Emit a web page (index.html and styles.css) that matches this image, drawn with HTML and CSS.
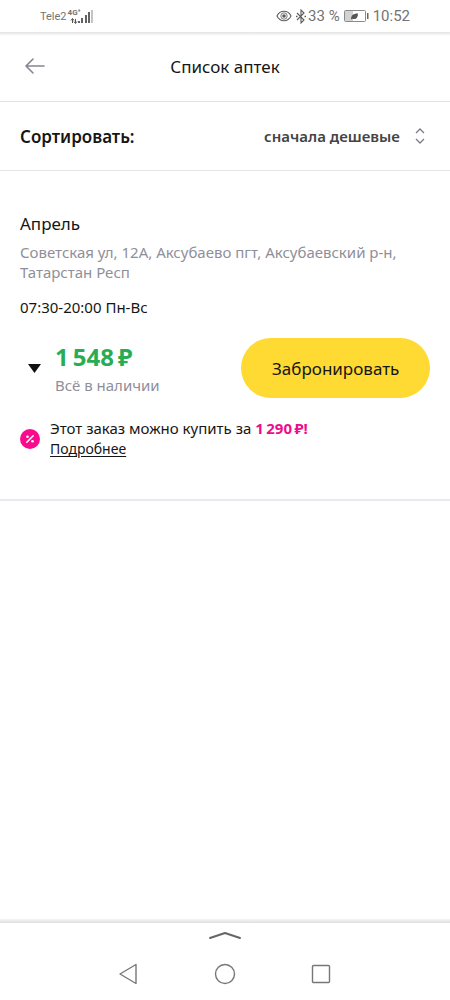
FILE: index.html
```html
<!DOCTYPE html>
<html lang="ru">
<head>
<meta charset="utf-8">
<meta name="viewport" content="width=device-width, initial-scale=1">
<title>Список аптек</title>
<link rel="stylesheet" href="styles.css">
</head>
<body>
<div class="status">
  <div class="carrier">
    <span>Tele2</span>
    <span class="network">
      <span class="network-type">4G⁺</span>
      <svg class="signal" width="26" height="15" viewBox="0 0 26 15" aria-hidden="true">
        <path d="M4.500 14v-4M3 11.500l1.500-2 1.500 2M7.500 10v4M6 12.500l1.500 2 1.500-2" fill="none" stroke="#555"/>
        <path d="M10 12h2v2h-2zM13 9h2v5h-2zM17 6h2v8h-2zM20 3h2v11h-2z" fill="#626262"/>
        <path d="M23 1h2v13h-2z" fill="#c4c4c4"/>
      </svg>
    </span>
  </div>
  <div class="indicators">
    <svg width="16" height="12" viewBox="0 0 16 12" fill="none" stroke="#5c5c5c" stroke-width="1.100" aria-hidden="true">
      <path d="M1 6C4-.3 12-.3 15 6 12 12.300 4 12.300 1 6z"/><circle cx="8" cy="6" r="3.200" stroke-width=".8"/><circle cx="8" cy="6" r="1.800" fill="#5c5c5c" stroke="none"/>
    </svg>
    <svg class="bluetooth" width="10" height="15" viewBox="0 0 10 15" fill="none" stroke="#5c5c5c" stroke-width="1.100" aria-hidden="true">
      <path d="M1 4l7 7-3 3V1l3 3-7 7"/><path d="M0 7.500h1.500M8.500 7.500H10" stroke-width="1.300"/>
    </svg>
    <span>33 %</span>
    <svg class="battery" width="26" height="14" viewBox="0 0 26 14" aria-hidden="true">
      <rect x="1.500" y="1.500" width="21" height="11" rx="1" fill="#fff" stroke="#8a8a8a"/>
      <path d="M2 2h8v10H2z" fill="#d2d2d2"/>
      <path d="M8 10.500c0-4 2-6 7-6 0 4-2 6.500-5.500 5.200z" fill="#555"/>
      <path d="M24 4h1.500v6H24z" fill="#666"/>
    </svg>
    <time>10:52</time>
  </div>
</div>

<header class="header">
  <button class="back" type="button" aria-label="Назад">
    <svg width="20" height="16" viewBox="0 0 20 16" fill="none" stroke="#85858f" stroke-width="1.600" stroke-linecap="round" stroke-linejoin="round"><path d="M19 8H1M8 1L1 8l7 7"/></svg>
  </button>
  <h1 class="title">Список аптек</h1>
</header>

<div class="sort">
  <label class="sort-label" for="sort">Сортировать:</label>
  <div class="sort-control">
    <select class="sort-select" id="sort"><option>сначала дешевые</option></select>
    <svg class="sort-icon" width="12" height="16" viewBox="0 0 12 16" fill="none" stroke="#7c7c85" stroke-width="1.300" aria-hidden="true"><path d="M2 5l4-4 4 4M2 11l4 4 4-4"/></svg>
  </div>
</div>

<main class="list">
  <article class="pharmacy">
    <h2 class="name">Апрель</h2>
    <p class="address">Советская ул, 12А, Аксубаево пгт, Аксубаевский р-н, Татарстан Респ</p>
    <p class="hours">07:30-20:00 Пн-Вс</p>
    <div class="offer">
      <button class="expand" type="button" aria-label="Показать состав">
        <svg width="13" height="9" viewBox="0 0 13 9"><path d="M0 0h13L6.500 9z" fill="#111"/></svg>
      </button>
      <div class="cost">
        <p class="price">1&#8201;548&#8201;₽</p>
        <p class="stock">Всё в наличии</p>
      </div>
      <button class="reserve" type="button">Забронировать</button>
    </div>
    <div class="promo">
      <svg class="promo-icon" width="20" height="20" viewBox="0 0 20 20" aria-hidden="true">
        <circle cx="10" cy="10" r="10" fill="#fa0a8c"/>
        <path d="M6.800 13.300l6.400-6.600" stroke="#fff" stroke-width="1.500" stroke-linecap="round"/>
        <circle cx="7.500" cy="7.700" r="1.300" fill="#fff"/><circle cx="12.500" cy="12.300" r="1.300" fill="#fff"/>
      </svg>
      <p class="promo-text">Этот заказ можно купить за <strong class="promo-price">1&#8201;290&#8201;₽!</strong><br><a class="more" href="#more">Подробнее</a></p>
    </div>
  </article>
</main>

<nav class="system" aria-label="Системная навигация">
  <svg class="pull" width="34" height="9" viewBox="0 0 34 9" fill="none" stroke="#666" stroke-width="2" stroke-linecap="round" stroke-linejoin="round" aria-hidden="true"><path d="M2 7l15-5 15 5"/></svg>
  <div class="keys">
    <button class="key" type="button" aria-label="Назад"><svg width="22" height="22" viewBox="0 0 22 22"><path d="M18 1.500v19L2 11z"/></svg></button>
    <button class="key" type="button" aria-label="Домой"><svg width="22" height="22" viewBox="0 0 22 22"><circle cx="11" cy="11" r="9.500"/></svg></button>
    <button class="key" type="button" aria-label="Недавние"><svg width="22" height="22" viewBox="0 0 22 22"><rect x="2.500" y="2.500" width="17" height="17" rx="1"/></svg></button>
  </div>
</nav>
</body>
</html>
```
FILE: styles.css
```css
* { box-sizing: border-box; }
body {
  margin: 0;
  min-height: 100vh;
  display: flex;
  flex-direction: column;
  background: #fff;
  color: #161616;
  font-family: "Noto Sans", "Open Sans", sans-serif;
}
h1, h2, p { margin: 0; font-weight: 400; }
button { border: 0; padding: 0; background: none; color: inherit; font: inherit; cursor: pointer; }
svg { display: block; flex: none; }

.status {
  display: flex;
  justify-content: space-between;
  height: 36px;
  padding: 0 40px 4px;
  background: linear-gradient(#fff 32px, #e2e2e2 32px, #fff 36px);
  color: #737373;
  font-family: Roboto, sans-serif;
}
.carrier, .indicators { display: flex; align-items: center; }
.carrier { font-size: 11px; gap: 1px; }
.network { display: grid; }
.network-type, .signal { grid-area: 1 / 1; }
.network-type { font-size: 8px; line-height: 8px; font-weight: 700; }
.indicators { font-size: 15px; }
.bluetooth { margin: 0 2px 0 4px; }
.battery { margin: 0 4px 0 3px; }

.header {
  display: grid;
  grid-template-columns: 30px 1fr 30px;
  align-items: center;
  height: 66px;
  padding: 0 20px 5px;
  border-bottom: 1px solid #e0e0e8;
}
.back { display: flex; justify-content: center; }
.title { text-align: center; font-size: 17px; }

.sort {
  display: flex;
  justify-content: space-between;
  align-items: center;
  height: 69px;
  padding: 0 20px;
  border-bottom: 1px solid #e3e3e8;
}
.sort-label { font-size: 17px; font-weight: 600; }
.sort-control { position: relative; }
.sort-select {
  appearance: none;
  border: 0;
  padding: 0 30px 0 0;
  background: none;
  color: #444;
  font: 600 15px/24px "Noto Sans", "Open Sans", sans-serif;
}
.sort-icon { position: absolute; right: 4px; top: 4px; pointer-events: none; }

.list { flex: 1; }
.pharmacy { padding: 41px 20px 40px; border-bottom: 2px solid #e8e8ee; }
.name { font-size: 17px; line-height: 24px; }
.address { margin-top: 6px; color: #8f8f9a; font-size: 15px; line-height: 20px; }
.hours { margin-top: 15px; font-size: 15px; line-height: 20px; }
.offer { display: flex; align-items: center; margin-top: 21px; }
.expand { width: 28px; display: flex; justify-content: center; }
.cost { flex: 1; padding-left: 7px; }
.price { color: #27ae55; font-size: 24px; line-height: 32px; font-weight: 700; }
.stock { margin-top: 2px; color: #8f8f9a; font-size: 15px; line-height: 20px; }
.reserve { width: 46%; height: 60px; border-radius: 30px; background: #ffda32; font-size: 17px; }
.promo { display: flex; align-items: center; gap: 10px; margin-top: 20px; }
.promo-text { font-size: 15px; line-height: 20px; }
.promo-price { color: #ee0c8d; font-weight: 700; }
.more { color: inherit; font-size: 14px; text-underline-offset: 2px; }

.system {
  height: 81px;
  padding-top: 12px;
  background: linear-gradient(#f5f5f5, #dedede 4px, #fff 4px);
}
.pull { margin: 0 auto; }
.keys { display: flex; justify-content: center; gap: 74px; margin-top: 23px; }
.key svg { fill: none; stroke: #777; stroke-width: 1.4; stroke-linejoin: round; }
```
